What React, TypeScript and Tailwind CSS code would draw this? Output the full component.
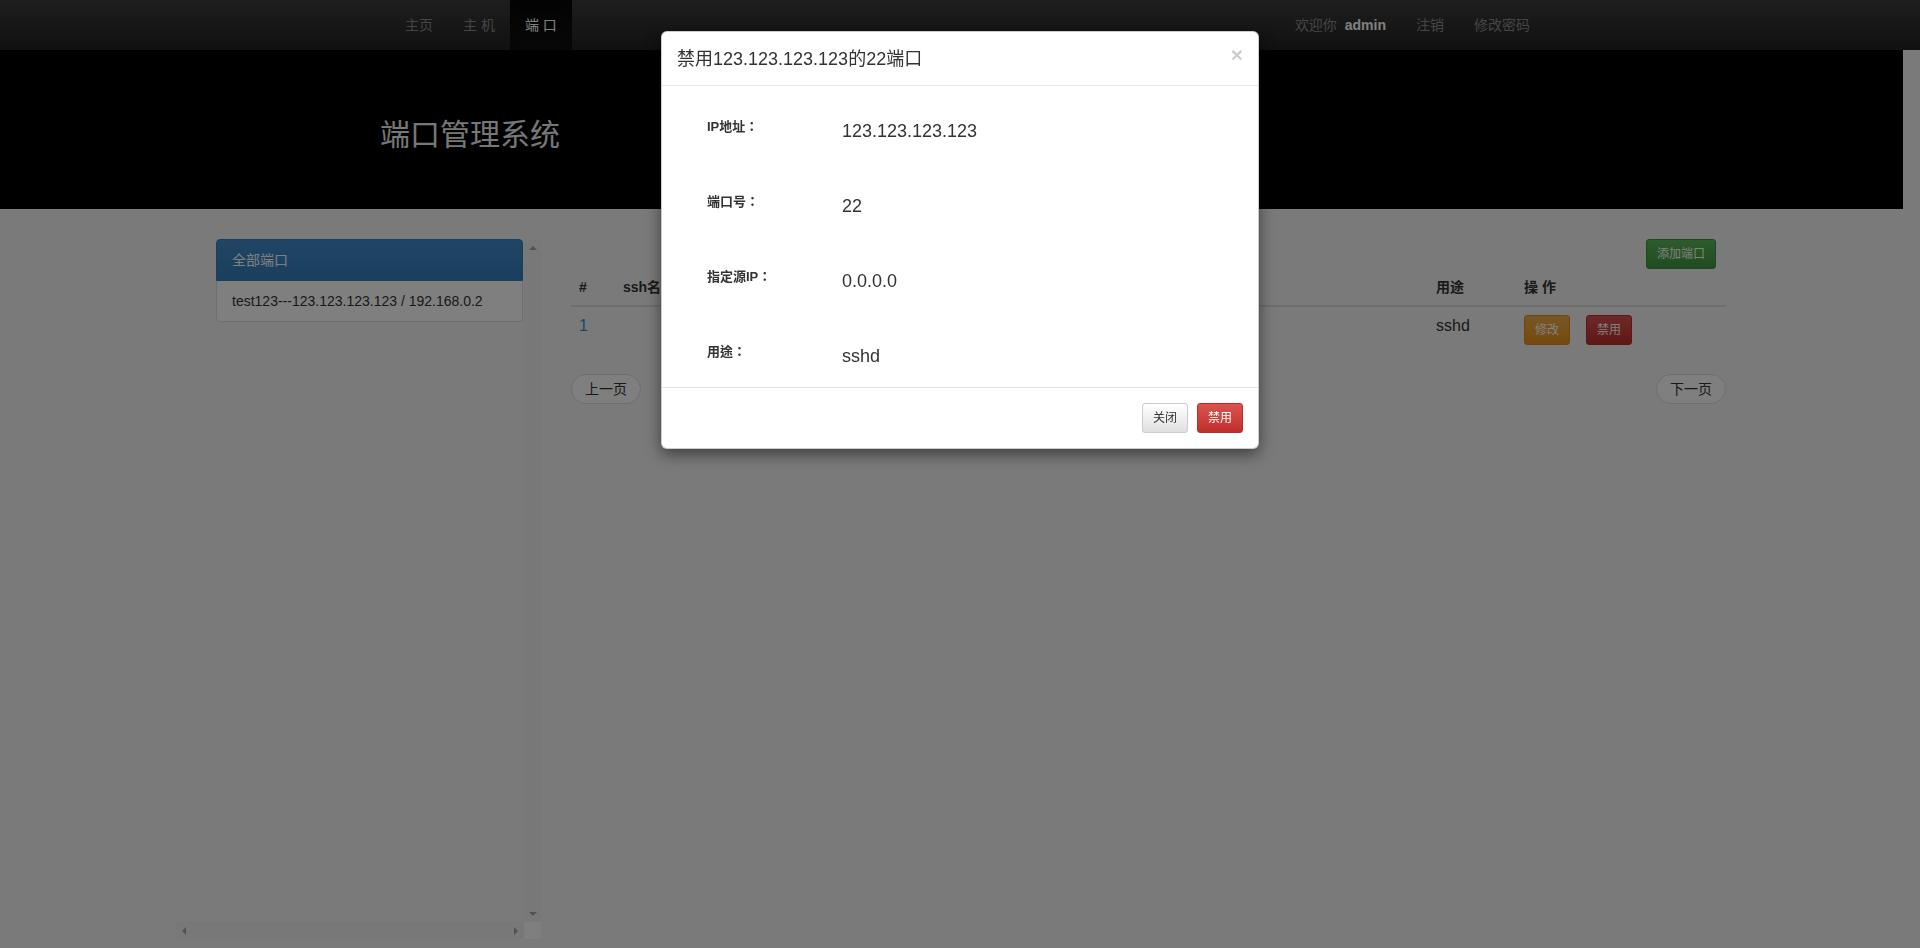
import React from 'react'

const headers = ['#', 'ssh名称', '', '', '', '用途', '操 作']

const details = [
  { label: 'IP地址：', value: '123.123.123.123' },
  { label: '端口号：', value: '22' },
  { label: '指定源IP：', value: '0.0.0.0' },
  { label: '用途：', value: 'sshd' },
]

function Arrow({ dir }: { dir: 'up' | 'down' | 'left' | 'right' }) {
  if (dir === 'up')
    return <span className="h-0 w-0 border-x-[4px] border-b-[4px] border-x-transparent border-b-[#a3a3a3]" />
  if (dir === 'down')
    return <span className="h-0 w-0 border-x-[4px] border-t-[4px] border-x-transparent border-t-[#a3a3a3]" />
  if (dir === 'left')
    return <span className="h-0 w-0 border-y-[4px] border-r-[4px] border-y-transparent border-r-[#a3a3a3]" />
  return <span className="h-0 w-0 border-y-[4px] border-l-[4px] border-y-transparent border-l-[#a3a3a3]" />
}

function Navbar() {
  return (
    <nav className="h-[50px] w-full bg-linear-to-b from-[#3c3c3c] to-[#222]">
      <div className="mx-auto flex h-full w-[1170px] justify-between text-[14px] leading-[20px] text-[#8a8a8a]">
        <ul className="ml-[15px] flex h-full">
          <li className="flex h-full items-center px-[15px]">主页</li>
          <li className="flex h-full items-center px-[15px]">主 机</li>
          <li className="flex h-full items-center bg-linear-to-b from-[#080808] to-[#0f0f0f] px-[15px] text-white shadow-[inset_0_3px_9px_rgba(0,0,0,0.25)]">
            端 口
          </li>
        </ul>
        <div className="flex h-full items-center">
          <span className="mr-[15px]">
            欢迎你 <b className="ml-1 font-bold text-white">admin</b>
          </span>
          <span className="flex h-full items-center px-[15px]">注销</span>
          <span className="flex h-full items-center px-[15px]">修改密码</span>
        </div>
      </div>
    </nav>
  )
}

function Sidebar() {
  return (
    <aside className="ml-[176px] flex h-[700px] w-[365px] flex-col">
      <div className="flex min-h-0 flex-1">
        <div className="flex-1 pl-[40px]">
          <div className="w-[307px]">
            <div className="rounded-t-[4px] border border-[#357ebd] bg-linear-to-b from-[#428bca] to-[#357ebd] px-[15px] py-[10px] text-[14px] leading-[20px] text-white">
              全部端口
            </div>
            <div className="rounded-b-[4px] border-x border-b border-[#ddd] bg-white px-[15px] py-[10px] text-[14px] leading-[20px] text-[#333]">
              test123---123.123.123.123 / 192.168.0.2
            </div>
          </div>
        </div>
        <div className="flex w-[17px] flex-col justify-between bg-[#f1f1f1]">
          <div className="flex h-[17px] items-center justify-center">
            <Arrow dir="up" />
          </div>
          <div className="flex h-[17px] items-center justify-center">
            <Arrow dir="down" />
          </div>
        </div>
      </div>
      <div className="flex h-[17px]">
        <div className="flex flex-1 items-center justify-between bg-[#f1f1f1] px-[6px]">
          <Arrow dir="left" />
          <Arrow dir="right" />
        </div>
        <div className="w-[17px] bg-white" />
      </div>
    </aside>
  )
}

function PortTable() {
  return (
    <section className="ml-[30px] w-[1155px]">
      <div className="flex justify-end pr-[10px]">
        <button className="h-[30px] w-[70px] rounded-[3px] border border-[#3e8f3e] bg-linear-to-b from-[#5cb85c] to-[#419641] text-[12px] text-white">
          添加端口
        </button>
      </div>

      <div className="grid grid-cols-[44px_185px_200px_100px_328px_88px_210px] text-[#333]">
        {headers.map((h, i) => (
          <div key={i} className="h-[38px] border-b-2 border-[#ddd] px-2 py-2 text-[14px] font-bold leading-[20px]">
            {h}
          </div>
        ))}
        <div className="px-2 py-2 text-[16px] leading-[22px] text-[#428bca]">1</div>
        <div />
        <div />
        <div />
        <div />
        <div className="px-2 py-2 text-[16px] leading-[22px]">sshd</div>
        <div className="flex gap-[16px] px-2 py-2">
          <button className="h-[30px] w-[46px] rounded-[3px] border border-[#e38d13] bg-linear-to-b from-[#f0ad4e] to-[#eb9316] text-[12px] text-white">
            修改
          </button>
          <button className="h-[30px] w-[46px] rounded-[3px] border border-[#b92c28] bg-linear-to-b from-[#d9534f] to-[#c12e2a] text-[12px] text-white">
            禁用
          </button>
        </div>
      </div>

      <div className="mt-[21px] flex justify-between">
        <button className="h-[30px] w-[70px] rounded-full border border-[#ddd] bg-white text-[14px] text-[#333]">
          上一页
        </button>
        <button className="h-[30px] w-[70px] rounded-full border border-[#ddd] bg-white text-[14px] text-[#333]">
          下一页
        </button>
      </div>
    </section>
  )
}

function DisableModal() {
  return (
    <div className="absolute left-[661px] top-[31px] w-[598px] rounded-[6px] border border-black/20 bg-white text-[#333] shadow-[0_5px_15px_rgba(0,0,0,0.5)]">
      <div className="flex items-start justify-between border-b border-[#e5e5e5] px-[15px] pt-[15px] pb-[14px]">
        <h4 className="text-[18px] leading-[24px]">禁用123.123.123.123的22端口</h4>
        <span className="-mt-[3px] text-[21px] font-bold leading-[21px] text-black/20">×</span>
      </div>
      <div className="flex flex-col gap-[41px] pl-[45px] pt-[25px] pb-[17px]">
        {details.map((d) => (
          <div key={d.label} className="flex h-[34px] items-center">
            <span className="w-[135px] pb-[3px] font-['Liberation_Sans','Noto_Sans_CJK_TC',sans-serif] text-[13px] font-bold leading-[18px]">
              {d.label}
            </span>
            <span className="pt-[5px] text-[18px] leading-[24px]">{d.value}</span>
          </div>
        ))}
      </div>
      <div className="flex justify-end gap-[9px] border-t border-[#e5e5e5] p-[15px]">
        <button className="h-[30px] w-[46px] rounded-[3px] border border-[#ccc] bg-linear-to-b from-white to-[#e0e0e0] text-[12px] text-[#333]">
          关闭
        </button>
        <button className="h-[30px] w-[46px] rounded-[3px] border border-[#b92c28] bg-linear-to-b from-[#d9534f] to-[#c12e2a] text-[12px] text-white">
          禁用
        </button>
      </div>
    </div>
  )
}

export default function App() {
  return (
    <div className="relative h-[948px] overflow-hidden bg-[#f5f5f5] font-['Liberation_Sans','Noto_Sans_CJK_SC',sans-serif]">
      <Navbar />
      <header className="mr-[17px] flex h-[159px] items-center bg-black pl-[380px]">
        <h1 className="pt-[10px] text-[30px] leading-[34px] text-[#eee]">端口管理系统</h1>
      </header>
      <main className="mt-[30px] flex">
        <Sidebar />
        <PortTable />
      </main>

      <div className="fixed inset-0 bg-black/50" />
      <DisableModal />
    </div>
  )
}
